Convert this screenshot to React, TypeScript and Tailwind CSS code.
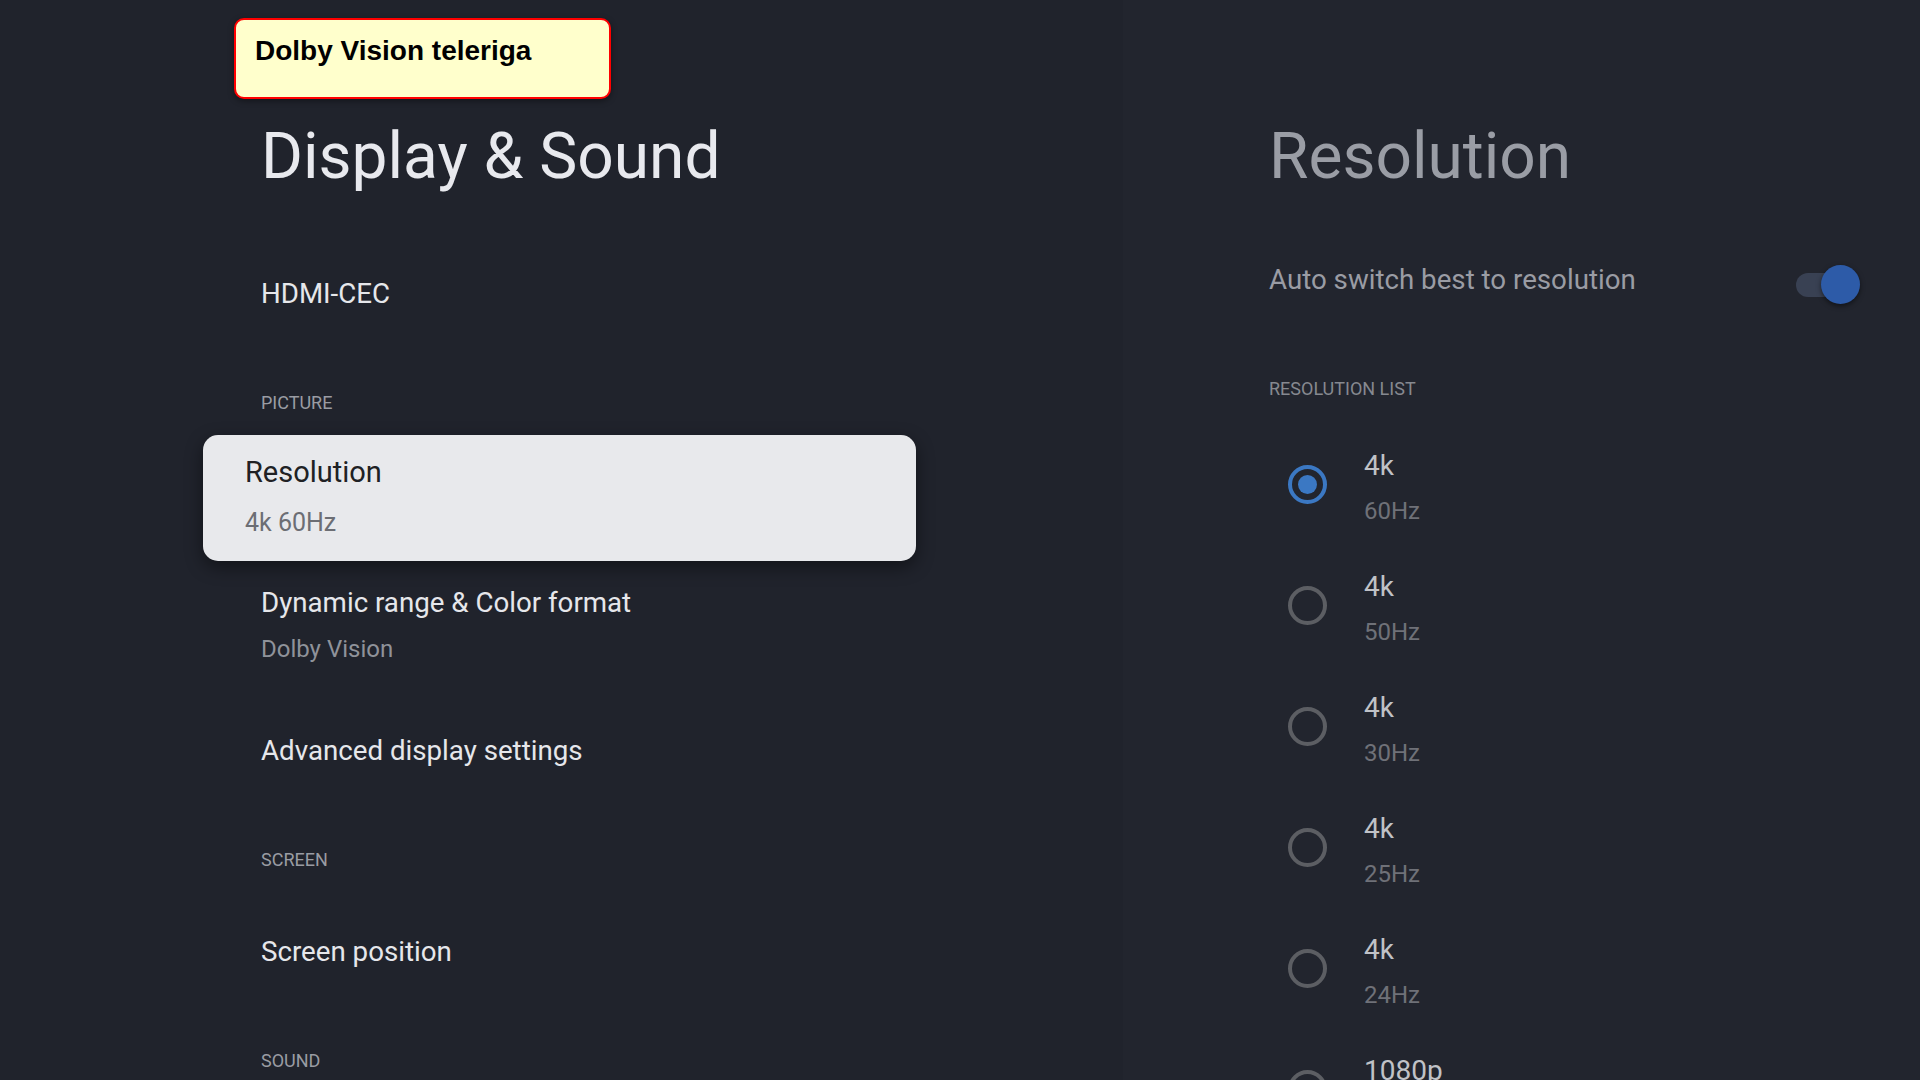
import React from 'react';

const roboto = { fontFamily: 'Roboto, "Noto Sans", sans-serif' };

const resolutions = [
  { res: '4k', rate: '60Hz', selected: true },
  { res: '4k', rate: '50Hz' },
  { res: '4k', rate: '30Hz' },
  { res: '4k', rate: '25Hz' },
  { res: '4k', rate: '24Hz' },
  { res: '1080p', rate: '60Hz' },
];

const SectionLabel: React.FC<{ text: string; className?: string }> = ({ text, className }) => (
  <div className={`pl-[58px] text-[18px] leading-[24px] text-[#9a9ca3] ${className ?? ''}`}>{text}</div>
);

const MenuItem: React.FC<{ title: string; subtitle?: string; className?: string }> = ({
  title,
  subtitle,
  className,
}) => (
  <div className={`pl-[58px] ${className ?? ''}`}>
    <div className="text-[27.7px] leading-[36px] text-[#e6e7eb]">{title}</div>
    {subtitle && <div className="mt-[12px] text-[24px] leading-[32px] text-[#8f929a]">{subtitle}</div>}
  </div>
);

const Radio: React.FC<{ checked?: boolean }> = ({ checked }) => (
  <div
    className={`flex h-[39px] w-[39px] shrink-0 items-center justify-center rounded-full border-[4px] ${
      checked ? 'border-[#3b78c3]' : 'border-[#5c5e63]'
    }`}
  >
    {checked && <div className="h-[19px] w-[19px] rounded-full bg-[#3b78c3]" />}
  </div>
);

export default function App() {
  return (
    <div className="relative flex h-[1080px] w-[1920px] overflow-hidden" style={roboto}>
      {/* left: settings list */}
      <div className="flex w-[1123px] shrink-0 flex-col bg-[#20232c] pl-[203px] pt-[119px]">
        <h1 className="pl-[58px] text-[64px] leading-[76px] font-normal text-[#e8e9ee]">Display &amp; Sound</h1>

        <MenuItem title="HDMI-CEC" className="mt-[81px]" />

        <SectionLabel text="PICTURE" className="mt-[79px]" />

        <div className="mt-[20px] h-[126px] w-[713px] shrink-0 rounded-[15px] bg-[#e8e9ec] px-[42px] pt-[19px] shadow-[0_6px_18px_rgba(0,0,0,0.45)]">
          <div className="text-[29px] leading-[36px] text-[#202124]">Resolution</div>
          <div className="mt-[17px] text-[25px] leading-[32px] text-[#6c6e74]">4k 60Hz</div>
        </div>

        <MenuItem title="Dynamic range & Color format" subtitle="Dolby Vision" className="mt-[24px]" />
        <MenuItem title="Advanced display settings" className="mt-[68px]" />

        <SectionLabel text="SCREEN" className="mt-[79px]" />
        <MenuItem title="Screen position" className="mt-[62px]" />

        <SectionLabel text="SOUND" className="mt-[79px]" />
      </div>

      {/* right: resolution panel */}
      <div className="flex flex-1 flex-col bg-[#22252e] pl-[146px] pr-[60px] pt-[119px]">
        <h2 className="text-[64px] leading-[76px] font-normal text-[#9a9da5]">Resolution</h2>

        <div className="mt-[69px] flex h-[40px] shrink-0 items-center justify-between">
          <span className="mb-[8px] text-[27.7px] leading-[36px] text-[#9a9ca4]">Auto switch best to resolution</span>
          <div className="relative h-[39px] w-[64px]">
            <div className="absolute left-0 top-[8px] h-[24px] w-[52px] rounded-full bg-[#394153]" />
            <div className="absolute right-0 top-0 h-[39px] w-[39px] rounded-full bg-[#2d5ba8] shadow-[0_2px_5px_rgba(0,0,0,0.5)]" />
          </div>
        </div>

        <div className="mt-[73px] text-[18px] leading-[24px] text-[#868990]">RESOLUTION LIST</div>

        <div className="mt-[23px] flex flex-col">
          {resolutions.map((r, i) => (
            <div key={i} className="flex h-[121px] shrink-0 items-center">
              <div className="ml-[19px]">
                <Radio checked={r.selected} />
              </div>
              <div className="ml-[37px] mt-[6px] flex flex-col">
                <span className="text-[28px] leading-[36px] text-[#c0c2c7]">{r.res}</span>
                <span className="mt-[11px] text-[24px] leading-[32px] text-[#6f7178]">{r.rate}</span>
              </div>
            </div>
          ))}
        </div>
      </div>

      {/* annotation badge */}
      <div
        className="absolute left-[234px] top-[18px] box-border h-[81px] w-[377px] rounded-[10px] border-2 border-[#ff0000] bg-[#ffffcc] pl-[19px] pt-[15px] shadow-[0_2px_6px_rgba(0,0,0,0.4)]"
        style={{ fontFamily: '"Liberation Sans", Arial, sans-serif' }}
      >
        <span className="text-[28px] leading-[32px] font-bold text-black">Dolby Vision teleriga</span>
      </div>
    </div>
  );
}
